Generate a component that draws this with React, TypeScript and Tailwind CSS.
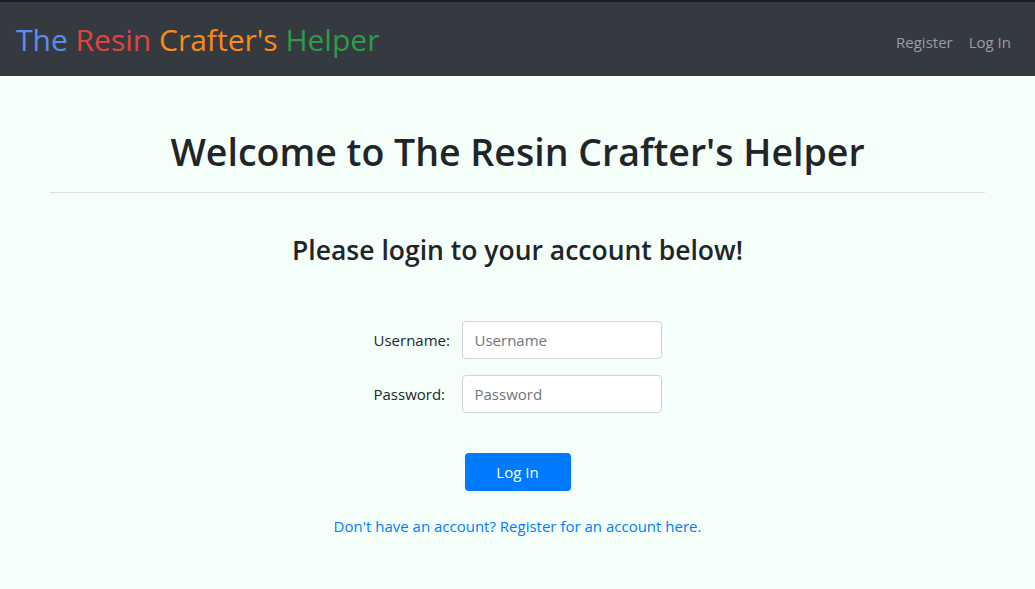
const App = () => {
    return (
        <div className="min-h-[589px] bg-[#f5fffa] font-['Open_Sans',sans-serif] text-[#212529]">
            {/* Navbar */}
            <nav className="flex h-[76px] items-center justify-between border-t-2 border-[#1a1d20] bg-[#343a40] pl-4 pr-6">
                <a className="pt-[2px] text-[30px] leading-none">
                    <span className="text-[#5b8dee]">The</span>{" "}
                    <span className="text-[#e0443e]">Resin</span>{" "}
                    <span className="text-[#fd8a14]">Crafter's</span>{" "}
                    <span className="text-[#2e9b4a]">Helper</span>
                </a>
                <div className="flex gap-4 pt-[7px] text-[15px] text-[#9a9da1]">
                    <a>Register</a>
                    <a>Log In</a>
                </div>
            </nav>

            {/* Main */}
            <main className="mx-[50px] flex flex-col items-center pt-[53px]">
                <h1 className="text-[37.5px] font-semibold leading-[1.2]">
                    Welcome to The Resin Crafter's Helper
                </h1>
                <hr className="mt-[18px] w-full border-t border-[#dcdfdc]" />
                <h3 className="mt-[42px] text-[26.5px] font-semibold leading-[1.2]">
                    Please login to your account below!
                </h3>

                <form className="mt-[54px] flex flex-col items-center">
                    <div className="flex items-center gap-[14px]">
                        <label className="w-[74px] text-[15px]">Username:</label>
                        <input
                            placeholder="Username"
                            className="h-[38px] w-[200px] rounded border border-[#ced4da] bg-white px-3 text-[15px] placeholder:text-[#6c757d]"
                        />
                    </div>
                    <div className="mt-[16px] flex items-center gap-[14px]">
                        <label className="w-[74px] text-[15px]">Password:</label>
                        <input
                            placeholder="Password"
                            type="password"
                            className="h-[38px] w-[200px] rounded border border-[#ced4da] bg-white px-3 text-[15px] placeholder:text-[#6c757d]"
                        />
                    </div>
                    <button
                        type="button"
                        className="mt-[40px] h-[38px] w-[106px] rounded bg-[#007bff] text-[15px] text-white"
                    >
                        Log In
                    </button>
                    <a className="mt-[24px] text-[15px] text-[#007bff]">
                        Don't have an account? Register for an account here.
                    </a>
                </form>
            </main>
        </div>
    );
};

export default App;
